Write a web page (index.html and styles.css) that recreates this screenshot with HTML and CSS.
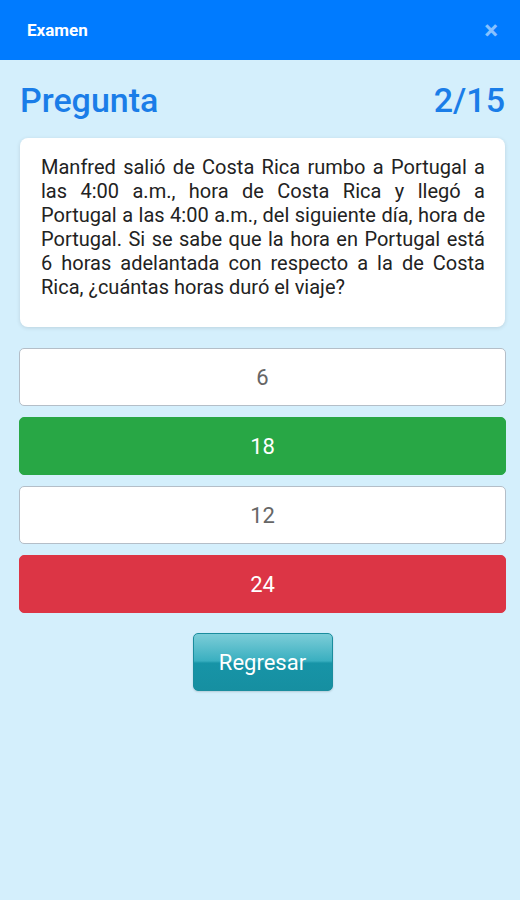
FILE: index.html
```html
<!DOCTYPE html>
<html lang="es">
<head>
    <meta charset="UTF-8">
    <meta name="viewport" content="width=device-width, initial-scale=1.0">
    <title>Examen</title>
    <link rel="stylesheet" href="styles.css">
</head>
<body>

    <!-- Header -->
    <div class="topbar">
        <span class="topbar-title">Examen</span>
        <span class="close">&times;</span>
    </div>

    <!-- Main Content -->
    <div class="container">
        <div class="question-head">
            <h1>Pregunta</h1>
            <span class="counter">2/15</span>
        </div>

        <div class="question-card">
            <p>Manfred salió de Costa Rica rumbo a Portugal a las 4:00 a.m., hora de Costa Rica y llegó a Portugal a las 4:00 a.m., del siguiente día, hora de Portugal. Si se sabe que la hora en Portugal está 6 horas adelantada con respecto a la de Costa Rica, ¿cuántas horas duró el viaje?</p>
        </div>

        <div class="options">
            <div class="option">6</div>
            <div class="option correct">18</div>
            <div class="option">12</div>
            <div class="option wrong">24</div>
        </div>

        <div class="actions">
            <button class="btn-back">Regresar</button>
        </div>
    </div>

</body>
</html>
```

FILE: styles.css
```css
body {
    font-family: Roboto, 'Liberation Sans', sans-serif;
    margin: 0;
    padding: 0;
    background-color: #d4effc;
    min-height: 900px;
}

.topbar {
    height: 60px;
    background-color: #007bff;
    display: flex;
    align-items: center;
    justify-content: space-between;
    padding: 0 22px 0 27px;
}

.topbar-title {
    color: white;
    font-size: 17px;
    font-weight: bold;
}

.close {
    color: rgba(255, 255, 255, 0.55);
    font-size: 26px;
    font-weight: bold;
    line-height: 1;
}

.container {
    padding: 20px 14px 0 19px;
}

.question-head {
    display: flex;
    justify-content: space-between;
    align-items: center;
    height: 40px;
    padding: 0 1px;
}

h1 {
    margin: 0;
    font-size: 34px;
    font-weight: 500;
    color: #1a7de8;
}

.counter {
    font-size: 34px;
    font-weight: 500;
    color: #1a7de8;
}

.question-card {
    margin: 18px 1px 0 1px;
    background-color: #fff;
    border-radius: 8px;
    box-shadow: 0 1px 4px rgba(0, 0, 0, 0.12);
    padding: 17px 20px 28px 21px;
}

.question-card p {
    margin: 0;
    font-size: 20px;
    line-height: 24px;
    color: #222;
    text-align: justify;
}

.options {
    display: flex;
    flex-direction: column;
    gap: 11px;
    margin-top: 21px;
}

.option {
    height: 56px;
    border: 1px solid #b4bec8;
    border-radius: 5px;
    background-color: #fff;
    color: #666;
    font-size: 22px;
    display: flex;
    align-items: center;
    justify-content: center;
}

.option.correct {
    background-color: #28a745;
    border-color: #28a745;
    color: #fff;
}

.option.wrong {
    background-color: #dc3545;
    border-color: #dc3545;
    color: #fff;
}

.actions {
    display: flex;
    justify-content: center;
    margin-top: 20px;
}

.btn-back {
    width: 140px;
    height: 58px;
    border: 1px solid #1a8d9e;
    border-radius: 5px;
    background: linear-gradient(to bottom, #7ccdd8 0%, #3aafc0 48%, #1794a7 52%, #168fa1 100%);
    color: #fff;
    font-family: Roboto, 'Liberation Sans', sans-serif;
    font-size: 22px;
    box-shadow: 0 1px 2px rgba(0, 0, 0, 0.15);
}
```
